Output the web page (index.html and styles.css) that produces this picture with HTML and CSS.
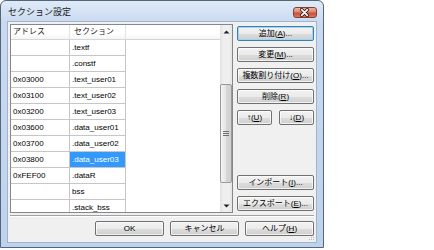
FILE: index.html
```html
<!DOCTYPE html>
<html lang="ja">
<head>
  <meta charset="UTF-8" />
  <title>セクション設定</title>
  <link rel="stylesheet" href="styles.css">
</head>
<body>
  <div class="window">
    <div class="titlebar">
      <span class="title">セクション設定</span>
      <div class="close">
        <svg width="24" height="11" viewBox="0 0 24 11">
          <path d="M9 2.5 L15 8.5 M15 2.5 L9 8.5" stroke="#3a1610" stroke-width="3.6" stroke-linecap="round"/>
          <path d="M9 2.5 L15 8.5 M15 2.5 L9 8.5" stroke="#fff" stroke-width="1.8" stroke-linecap="round"/>
        </svg>
      </div>
    </div>

    <div class="client">
      <div class="main">
        <div class="list">
          <div class="list-view">
            <div class="header">
              <div class="hcell c1">アドレス</div>
              <div class="hcell c2">セクション</div>
            </div>
            <div class="rows">
              <div class="row"><div class="cell c1"></div><div class="cell c2">.textf</div></div>
              <div class="row"><div class="cell c1"></div><div class="cell c2">.constf</div></div>
              <div class="row"><div class="cell c1">0x03000</div><div class="cell c2">.text_user01</div></div>
              <div class="row"><div class="cell c1">0x03100</div><div class="cell c2">.text_user02</div></div>
              <div class="row"><div class="cell c1">0x03200</div><div class="cell c2">.text_user03</div></div>
              <div class="row"><div class="cell c1">0x03600</div><div class="cell c2">.data_user01</div></div>
              <div class="row"><div class="cell c1">0x03700</div><div class="cell c2">.data_user02</div></div>
              <div class="row"><div class="cell c1">0x03800</div><div class="cell c2 selected">.data_user03</div></div>
              <div class="row"><div class="cell c1">0xFEF00</div><div class="cell c2">.dataR</div></div>
              <div class="row"><div class="cell c1"></div><div class="cell c2">bss</div></div>
              <div class="row"><div class="cell c1"></div><div class="cell c2">.stack_bss</div></div>
            </div>
          </div>
          <div class="scrollbar">
            <div class="arrow">
              <svg width="7" height="4" viewBox="0 0 7 4"><path d="M0.5 3.5 L3.5 0.5 L6.5 3.5 Z" fill="#222"/></svg>
            </div>
            <div class="track-top"></div>
            <div class="thumb">
              <svg width="6" height="5" viewBox="0 0 6 5"><path d="M0 0.5 H6 M0 2.5 H6 M0 4.5 H6" stroke="#707070" stroke-width="1"/></svg>
            </div>
            <div class="track-bottom"></div>
            <div class="arrow">
              <svg width="7" height="4" viewBox="0 0 7 4"><path d="M0.5 0.5 L3.5 3.5 L6.5 0.5 Z" fill="#222"/></svg>
            </div>
          </div>
        </div>

        <div class="side">
          <button class="btn default">追加(<u>A</u>)...</button>
          <button class="btn">変更(<u>M</u>)...</button>
          <button class="btn">複数割り付け(<u>O</u>)...</button>
          <button class="btn">削除(<u>R</u>)</button>
          <div class="pair">
            <button class="btn">↑(<u>U</u>)</button>
            <button class="btn">↓(<u>D</u>)</button>
          </div>
          <button class="btn push">インポート(<u>I</u>)...</button>
          <button class="btn">エクスポート(<u>E</u>)...</button>
        </div>
      </div>

      <div class="separator"></div>

      <div class="footer">
        <button class="btn wide">OK</button>
        <button class="btn wide">キャンセル</button>
        <button class="btn wide">ヘルプ(<u>H</u>)</button>
      </div>

      <svg class="grip" width="6" height="6" viewBox="0 0 6 6">
        <rect x="4" y="0" width="1" height="1" fill="#b8b8b8"/>
        <rect x="2" y="2" width="1" height="1" fill="#b8b8b8"/>
        <rect x="4" y="2" width="1" height="1" fill="#b8b8b8"/>
        <rect x="0" y="4" width="1" height="1" fill="#b8b8b8"/>
        <rect x="2" y="4" width="1" height="1" fill="#b8b8b8"/>
        <rect x="4" y="4" width="1" height="1" fill="#b8b8b8"/>
      </svg>
    </div>
  </div>
</body>
</html>
```

FILE: styles.css
```css
body {
  margin: 0;
  background: #fff;
  font-family: "Liberation Sans", "Noto Sans CJK JP", sans-serif;
  font-size: 8px;
  color: #000;
}

.window {
  width: 324px;
  height: 248px;
  box-sizing: border-box;
  border: 1px solid #55657a;
  border-radius: 6px 6px 0 0;
  background: linear-gradient(#dfeaf7 0px, #c9daf0 22px, #bdd2ec 100%);
  padding: 0 6px 4px 6px;
  display: flex;
  flex-direction: column;
}

.titlebar {
  height: 21px;
  display: flex;
  align-items: center;
  justify-content: space-between;
  padding-left: 1px;
}

.title {
  font-family: "Noto Sans CJK JP", sans-serif;
  font-size: 9px;
  color: #1a1a1a;
}

.close {
  width: 24px;
  height: 11px;
  box-sizing: border-box;
  border: 1px solid #8a3f33;
  border-radius: 3px;
  background: linear-gradient(#eab3a6 0%, #d98672 45%, #c6523a 55%, #d7765c 100%);
  display: flex;
  margin-top: 2px;
}

.close svg {
  margin: -1px 0 0 -1px;
}

.client {
  flex: 1;
  position: relative;
  background: #f0f0f0;
  border: 1px solid #9fb3cc;
  padding: 2px 2px 6px 2px;
  display: flex;
  flex-direction: column;
}

.grip {
  position: absolute;
  right: 1px;
  bottom: 1px;
}

.main {
  height: 189px;
  display: flex;
  gap: 4px;
}

.list {
  width: 223px;
  box-sizing: border-box;
  border: 1px solid #828790;
  background: #fff;
  display: flex;
  overflow: hidden;
}

.list-view {
  flex: 1;
  display: flex;
  flex-direction: column;
  overflow: hidden;
}

.header {
  height: 15px;
  box-sizing: border-box;
  display: flex;
  border-bottom: 1px solid #d5d5d5;
  background: linear-gradient(#ffffff 0%, #ffffff 60%, #f4f5f7 100%);
}

.hcell {
  box-sizing: border-box;
  border-right: 1px solid #e3e3e3;
  padding-left: 2px;
  line-height: 14px;
  color: #1c1c1c;
}

.hcell.c2 {
  padding-left: 4px;
}

.rows {
  flex: 1;
  overflow: hidden;
}

.row {
  display: flex;
  width: 115px;
  height: 16px;
  box-sizing: border-box;
  border-bottom: 1px solid #c6c6c6;
}

.cell {
  box-sizing: border-box;
  border-right: 1px solid #c6c6c6;
  padding-left: 2px;
  line-height: 15px;
  white-space: nowrap;
}

.c1 {
  width: 59px;
}

.c2 {
  width: 56px;
}

.cell.selected {
  background: #3399ff;
  color: #fff;
}

.scrollbar {
  width: 12px;
  display: flex;
  flex-direction: column;
  background: linear-gradient(to right, #e3e3e3, #efefef 30%, #efefef 70%, #e6e6e6);
}

.arrow {
  height: 13px;
  display: flex;
  align-items: center;
  justify-content: center;
}

.track-top {
  height: 46px;
}

.thumb {
  height: 99px;
  box-sizing: border-box;
  border: 1px solid #9a9a9a;
  border-radius: 2px;
  background: linear-gradient(to right, #f4f4f4, #e4e4e4 50%, #d6d6d6 51%, #cfcfcf);
  display: flex;
  align-items: center;
  justify-content: center;
}

.track-bottom {
  flex: 1;
}

.side {
  width: 77px;
  display: flex;
  flex-direction: column;
  gap: 6px;
  padding: 2px 0;
}

.pair {
  display: flex;
  justify-content: space-between;
}

.pair .btn {
  width: 35px;
}

.push {
  margin-top: auto;
}

.btn {
  height: 15px;
  box-sizing: border-box;
  border: 1px solid #707070;
  border-radius: 2px;
  background: linear-gradient(#f2f2f2 0%, #ebebeb 50%, #dddddd 51%, #cfcfcf 100%);
  box-shadow: inset 0 0 0 1px rgba(255, 255, 255, 0.7);
  font: inherit;
  color: #000;
  padding: 0;
  line-height: 13px;
  white-space: nowrap;
}

.btn.default {
  border-color: #3c7fb1;
  box-shadow: inset 0 0 0 1px #9ad7f5;
}

.separator {
  height: 2px;
  margin: 2px 0 4px 0;
  border-top: 1px solid #a0a0a0;
  border-bottom: 1px solid #fff;
  box-sizing: border-box;
}

.footer {
  display: flex;
  justify-content: flex-end;
  gap: 6px;
}

.btn.wide {
  width: 69px;
}
```
